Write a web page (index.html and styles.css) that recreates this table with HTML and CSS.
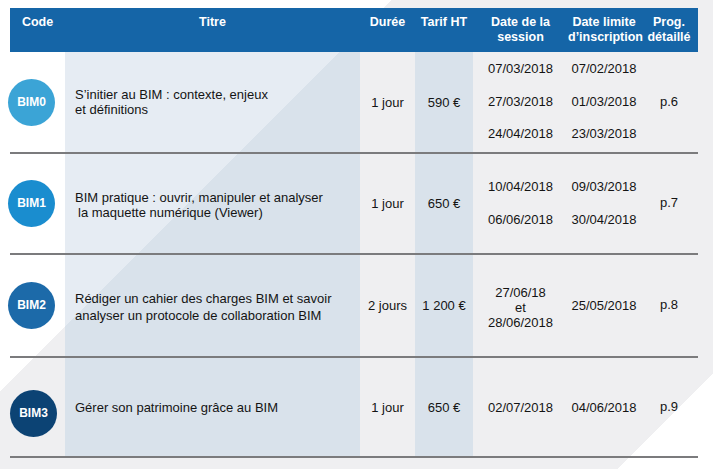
FILE: index.html
```html
<!DOCTYPE html>
<html lang="fr">
<head>
<meta charset="utf-8">
<title>Formations BIM</title>
<link rel="stylesheet" href="styles.css">
</head>
<body>
<div class="page">
  <table class="schedule">
    <colgroup>
      <col class="w-code"><col class="w-title"><col class="w-dur"><col class="w-price"><col class="w-session"><col class="w-limit"><col class="w-prog">
    </colgroup>
    <thead>
      <tr>
        <th>Code</th>
        <th>Titre</th>
        <th>Durée</th>
        <th>Tarif HT</th>
        <th>Date de la<br>session</th>
        <th>Date limite<br>d’inscription</th>
        <th>Prog.<br>détaillé</th>
      </tr>
    </thead>
    <tbody>
      <tr class="r1">
        <td class="code"><div class="badge b0">BIM0</div></td>
        <td class="title tint">S’initier au BIM : contexte, enjeux<br>et définitions</td>
        <td>1 jour</td>
        <td class="tint">590 €</td>
        <td class="dates">07/03/2018<br>27/03/2018<br>24/04/2018</td>
        <td class="dates">07/02/2018<br>01/03/2018<br>23/03/2018</td>
        <td class="prog">p.6</td>
      </tr>
      <tr class="r2">
        <td class="code"><div class="badge b1">BIM1</div></td>
        <td class="title tint low">BIM pratique : ouvrir, manipuler et analyser<br><span class="indent">la maquette numérique (Viewer)</span></td>
        <td>1 jour</td>
        <td class="tint">650 €</td>
        <td class="dates">10/04/2018<br>06/06/2018</td>
        <td class="dates">09/03/2018<br>30/04/2018</td>
        <td class="prog">p.7</td>
      </tr>
      <tr class="r3">
        <td class="code"><div class="badge b2">BIM2</div></td>
        <td class="title tint wide">Rédiger un cahier des charges BIM et savoir<br>analyser un protocole de collaboration BIM</td>
        <td>2 jours</td>
        <td class="tint">1 200 €</td>
        <td class="low">27/06/18<br>et<br>28/06/2018</td>
        <td>25/05/2018</td>
        <td class="prog">p.8</td>
      </tr>
      <tr class="r4">
        <td class="code"><div class="badge b3">BIM3</div></td>
        <td class="title tint">Gérer son patrimoine grâce au BIM</td>
        <td>1 jour</td>
        <td class="tint">650 €</td>
        <td>02/07/2018</td>
        <td>04/06/2018</td>
        <td class="prog">p.9</td>
      </tr>
    </tbody>
  </table>
</div>
</body>
</html>
```
FILE: styles.css
```css
html, body {
  margin: 0;
  height: 100%;
}
html {
  background: linear-gradient(135deg, #ffffff 277px, #efeff1 277px, #efeff1 768px, #ffffff 768px);
}
body {
  font-family: "Liberation Sans", Arial, Helvetica, sans-serif;
  color: #141414;
}
.page {
  padding: 8px 0 0 10px;
}
.schedule {
  border-collapse: collapse;
  table-layout: fixed;
  width: 688px;
}
.w-code { width: 55px; }
.w-title { width: 295px; }
.w-dur { width: 55px; }
.w-price { width: 58px; }
.w-session { width: 95px; }
.w-limit { width: 72px; }
.w-prog { width: 58px; }

.schedule thead tr { height: 44px; }
.schedule th {
  background: #1565a7;
  color: #ffffff;
  font-weight: bold;
  font-size: 12.5px;
  line-height: 15px;
  padding: 7px 0 0;
  vertical-align: top;
  text-align: center;
}
.schedule td {
  border-bottom: 2px solid #7b7b7d;
  text-align: center;
  vertical-align: middle;
  padding: 0;
  font-size: 13px;
  line-height: 15px;
}
.r1 { height: 101px; }
.r2 { height: 101px; }
.r3 { height: 103px; }
.r4 { height: 100px; }

.schedule td.tint {
  background: linear-gradient(135deg, #e6ecf3 277px, #d9e2eb 277px, #d9e2eb 768px, #e6ecf3 768px) fixed;
}
.schedule td.title {
  text-align: left;
  padding-left: 10px;
}
.schedule td.title.wide { line-height: 17px; padding-top: 2px; }
.indent { padding-left: 3px; }
.schedule td.dates { line-height: 32.5px; }
.schedule td.low { padding-top: 3px; }
.schedule td.prog { padding-bottom: 2px; }

.schedule td.code { text-align: left; }
.badge {
  width: 47px;
  height: 47px;
  border-radius: 50%;
  margin-left: -2px;
  display: flex;
  align-items: center;
  justify-content: center;
  color: #ffffff;
  font-weight: bold;
  font-size: 12px;
}
.b0 { background: #3ba4d6; }
.b1 { background: #1a8dcf; }
.b2 { background: #1c6aa9; }
.b3 { background: #0c4374; margin: 12px 0 0 0; }
```
